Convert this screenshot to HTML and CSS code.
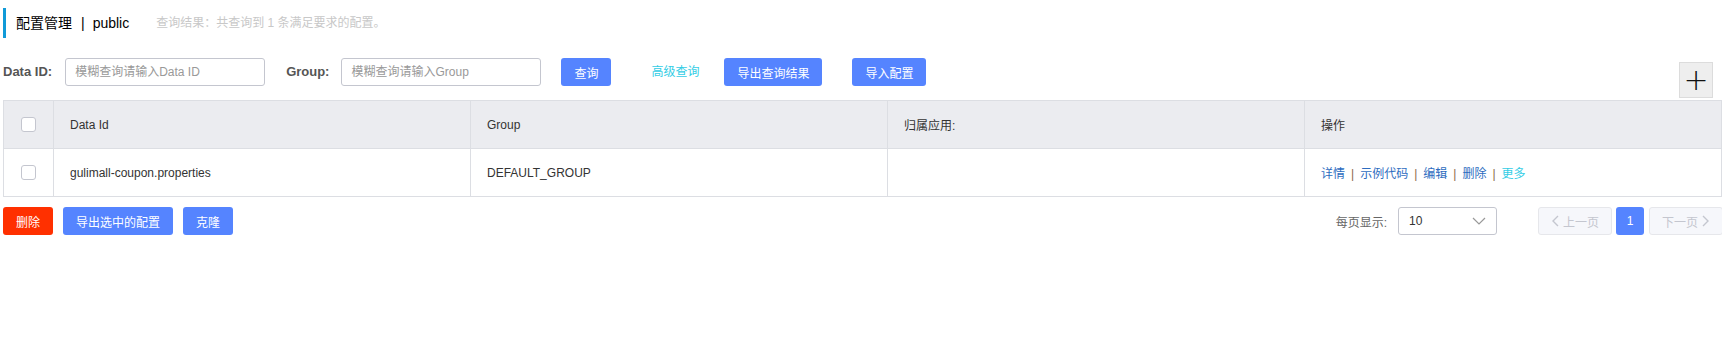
FILE: index.html
```html
<!DOCTYPE html>
<html lang="zh-CN">
<head>
    <meta charset="UTF-8">
    <title>配置管理</title>
    <link rel="stylesheet" href="styles.css">
</head>
<body>
    <div class="page-title">
        <span class="title-main">配置管理</span>
        <span class="title-sep">|</span>
        <span class="title-ns">public</span>
        <span class="title-desc">查询结果：共查询到 1 条满足要求的配置。</span>
    </div>

    <div class="search-bar">
        <label class="search-label">Data ID:</label>
        <input type="text" class="search-input" placeholder="模糊查询请输入Data ID">
        <label class="search-label group-label">Group:</label>
        <input type="text" class="search-input" placeholder="模糊查询请输入Group">
        <button class="btn btn-primary btn-query">查询</button>
        <a class="link-advanced">高级查询</a>
        <button class="btn btn-primary btn-export">导出查询结果</button>
        <button class="btn btn-primary btn-import">导入配置</button>
        <button class="btn-add">+</button>
    </div>

    <table class="config-table">
        <colgroup>
            <col class="col-check">
            <col>
            <col>
            <col>
            <col>
        </colgroup>
        <thead>
            <tr>
                <th><span class="checkbox"></span></th>
                <th>Data Id</th>
                <th>Group</th>
                <th>归属应用:</th>
                <th>操作</th>
            </tr>
        </thead>
        <tbody>
            <tr>
                <td><span class="checkbox"></span></td>
                <td>gulimall-coupon.properties</td>
                <td>DEFAULT_GROUP</td>
                <td></td>
                <td class="actions">
                    <a>详情</a><span class="sep">|</span><a>示例代码</a><span class="sep">|</span><a>编辑</a><span class="sep">|</span><a>删除</a><span class="sep">|</span><a class="more">更多</a>
                </td>
            </tr>
        </tbody>
    </table>

    <div class="footer-bar">
        <button class="btn btn-danger">删除</button>
        <button class="btn btn-primary btn-export-selected">导出选中的配置</button>
        <button class="btn btn-primary btn-clone">克隆</button>

        <div class="pagination">
            <span class="page-size-label">每页显示:</span>
            <div class="page-size-select">
                <span>10</span>
                <svg class="chevron" width="14" height="8" viewBox="0 0 14 8"><path d="M1 1l6 6 6-6" fill="none" stroke="#999" stroke-width="1.2"/></svg>
            </div>
            <button class="page-btn page-nav page-prev"><svg width="8" height="12" viewBox="0 0 8 12"><path d="M7 1L2 6l5 5" fill="none" stroke="#c4c6cf" stroke-width="1.4"/></svg>上一页</button>
            <button class="page-btn page-current">1</button>
            <button class="page-btn page-nav page-next">下一页<svg width="8" height="12" viewBox="0 0 8 12"><path d="M1 1l5 5-5 5" fill="none" stroke="#c4c6cf" stroke-width="1.4"/></svg></button>
        </div>
    </div>
</body>
</html>
```

FILE: styles.css
```css
body {
    margin: 0;
    font-family: "Liberation Sans", "Noto Sans CJK SC", sans-serif;
    font-size: 12px;
    color: #333;
    background: #fff;
}

.page-title {
    margin: 8px 0 0 3px;
    height: 30px;
    line-height: 30px;
    padding-left: 10px;
    border-left: 3px solid #109ad8;
    display: flex;
    align-items: center;
}

.title-main {
    font-size: 14px;
    color: #000;
}

.title-sep {
    font-size: 14px;
    color: #000;
    margin: 0 8px 0 9px;
}

.title-ns {
    font-size: 14px;
    color: #000;
}

.title-desc {
    margin-left: 27px;
    font-size: 12px;
    color: #c8c8c8;
}

.search-bar {
    display: flex;
    align-items: flex-start;
    margin-top: 20px;
    padding-left: 3px;
    padding-right: 9px;
    height: 40px;
}

.search-label {
    font-size: 13px;
    font-weight: bold;
    color: #555;
    line-height: 28px;
    margin-right: 13px;
}

.group-label {
    margin-left: 21px;
    margin-right: 12px;
}

.search-input {
    box-sizing: border-box;
    width: 200px;
    height: 28px;
    border: 1px solid #c4c6cf;
    border-radius: 3px;
    padding: 0 9px;
    font-family: inherit;
    font-size: 12px;
    color: #333;
    outline: none;
}

.search-input::placeholder {
    color: #999;
}

.btn {
    box-sizing: border-box;
    height: 28px;
    border: none;
    border-radius: 3px;
    padding: 0;
    font-family: inherit;
    font-size: 12px;
    color: #fff;
    cursor: pointer;
}

.btn-primary {
    background: #5584ff;
}

.btn-danger {
    background: #ff3000;
}

.btn-query {
    width: 50px;
    margin-left: 20px;
}

.link-advanced {
    margin-left: 40px;
    line-height: 28px;
    color: #33cde5;
    cursor: pointer;
}

.btn-export {
    width: 98px;
    margin-left: 25px;
}

.btn-import {
    width: 74px;
    margin-left: 30px;
}

.btn-add {
    margin-left: auto;
    margin-top: 4px;
    width: 34px;
    height: 36px;
    box-sizing: border-box;
    border: 1px solid #dcdcdc;
    background: #eee;
    padding: 0;
    font-family: "DejaVu Sans", sans-serif;
    font-size: 30px;
    font-weight: 300;
    line-height: 30px;
    color: #111;
    cursor: pointer;
}

.config-table {
    margin: 2px 0 0 3px;
    width: 1719px;
    table-layout: fixed;
    border-collapse: collapse;
    border: 1px solid #dcdee3;
}

.col-check {
    width: 50px;
}

.config-table th,
.config-table td {
    border: 1px solid #dcdee3;
    text-align: left;
    padding: 0 16px;
    font-weight: normal;
    font-size: 12px;
    color: #333;
}

.config-table th {
    height: 47px;
    background: #ebecf0;
}

.config-table td {
    height: 47px;
    background: #fff;
}

.config-table th:first-child,
.config-table td:first-child {
    padding: 0;
    text-align: center;
}

.checkbox {
    display: inline-block;
    vertical-align: middle;
    box-sizing: border-box;
    width: 15px;
    height: 15px;
    border: 1px solid #c4c6cf;
    border-radius: 3px;
    background: #fff;
}

.actions a {
    color: #2d6cc0;
    cursor: pointer;
}

.actions .more {
    color: #33cde5;
}

.actions .sep {
    color: #8a6a4a;
    margin: 0 6px;
}

.footer-bar {
    display: flex;
    align-items: center;
    margin-top: 10px;
    padding-left: 3px;
}

.btn-danger {
    width: 50px;
}

.btn-export-selected {
    width: 110px;
    margin-left: 10px;
}

.btn-clone {
    width: 50px;
    margin-left: 10px;
}

.pagination {
    margin-left: auto;
    display: flex;
    align-items: center;
    margin-right: -1px;
}

.page-size-label {
    color: #666;
    margin-right: 11px;
}

.page-size-select {
    box-sizing: border-box;
    width: 99px;
    height: 28px;
    border: 1px solid #c4c6cf;
    border-radius: 3px;
    padding: 0 10px;
    display: flex;
    align-items: center;
    justify-content: space-between;
    color: #333;
    margin-right: 41px;
}

.page-btn {
    box-sizing: border-box;
    height: 28px;
    border-radius: 3px;
    font-family: inherit;
    font-size: 12px;
    padding: 0;
    display: flex;
    align-items: center;
    justify-content: center;
}

.page-nav {
    width: 74px;
    background: #f6f7fb;
    border: 1px solid #e6e7eb;
    color: #c4c6cf;
    gap: 4px;
}

.page-current {
    width: 28px;
    margin: 0 5px 0 4px;
    background: #5584ff;
    border: none;
    color: #fff;
}
```
